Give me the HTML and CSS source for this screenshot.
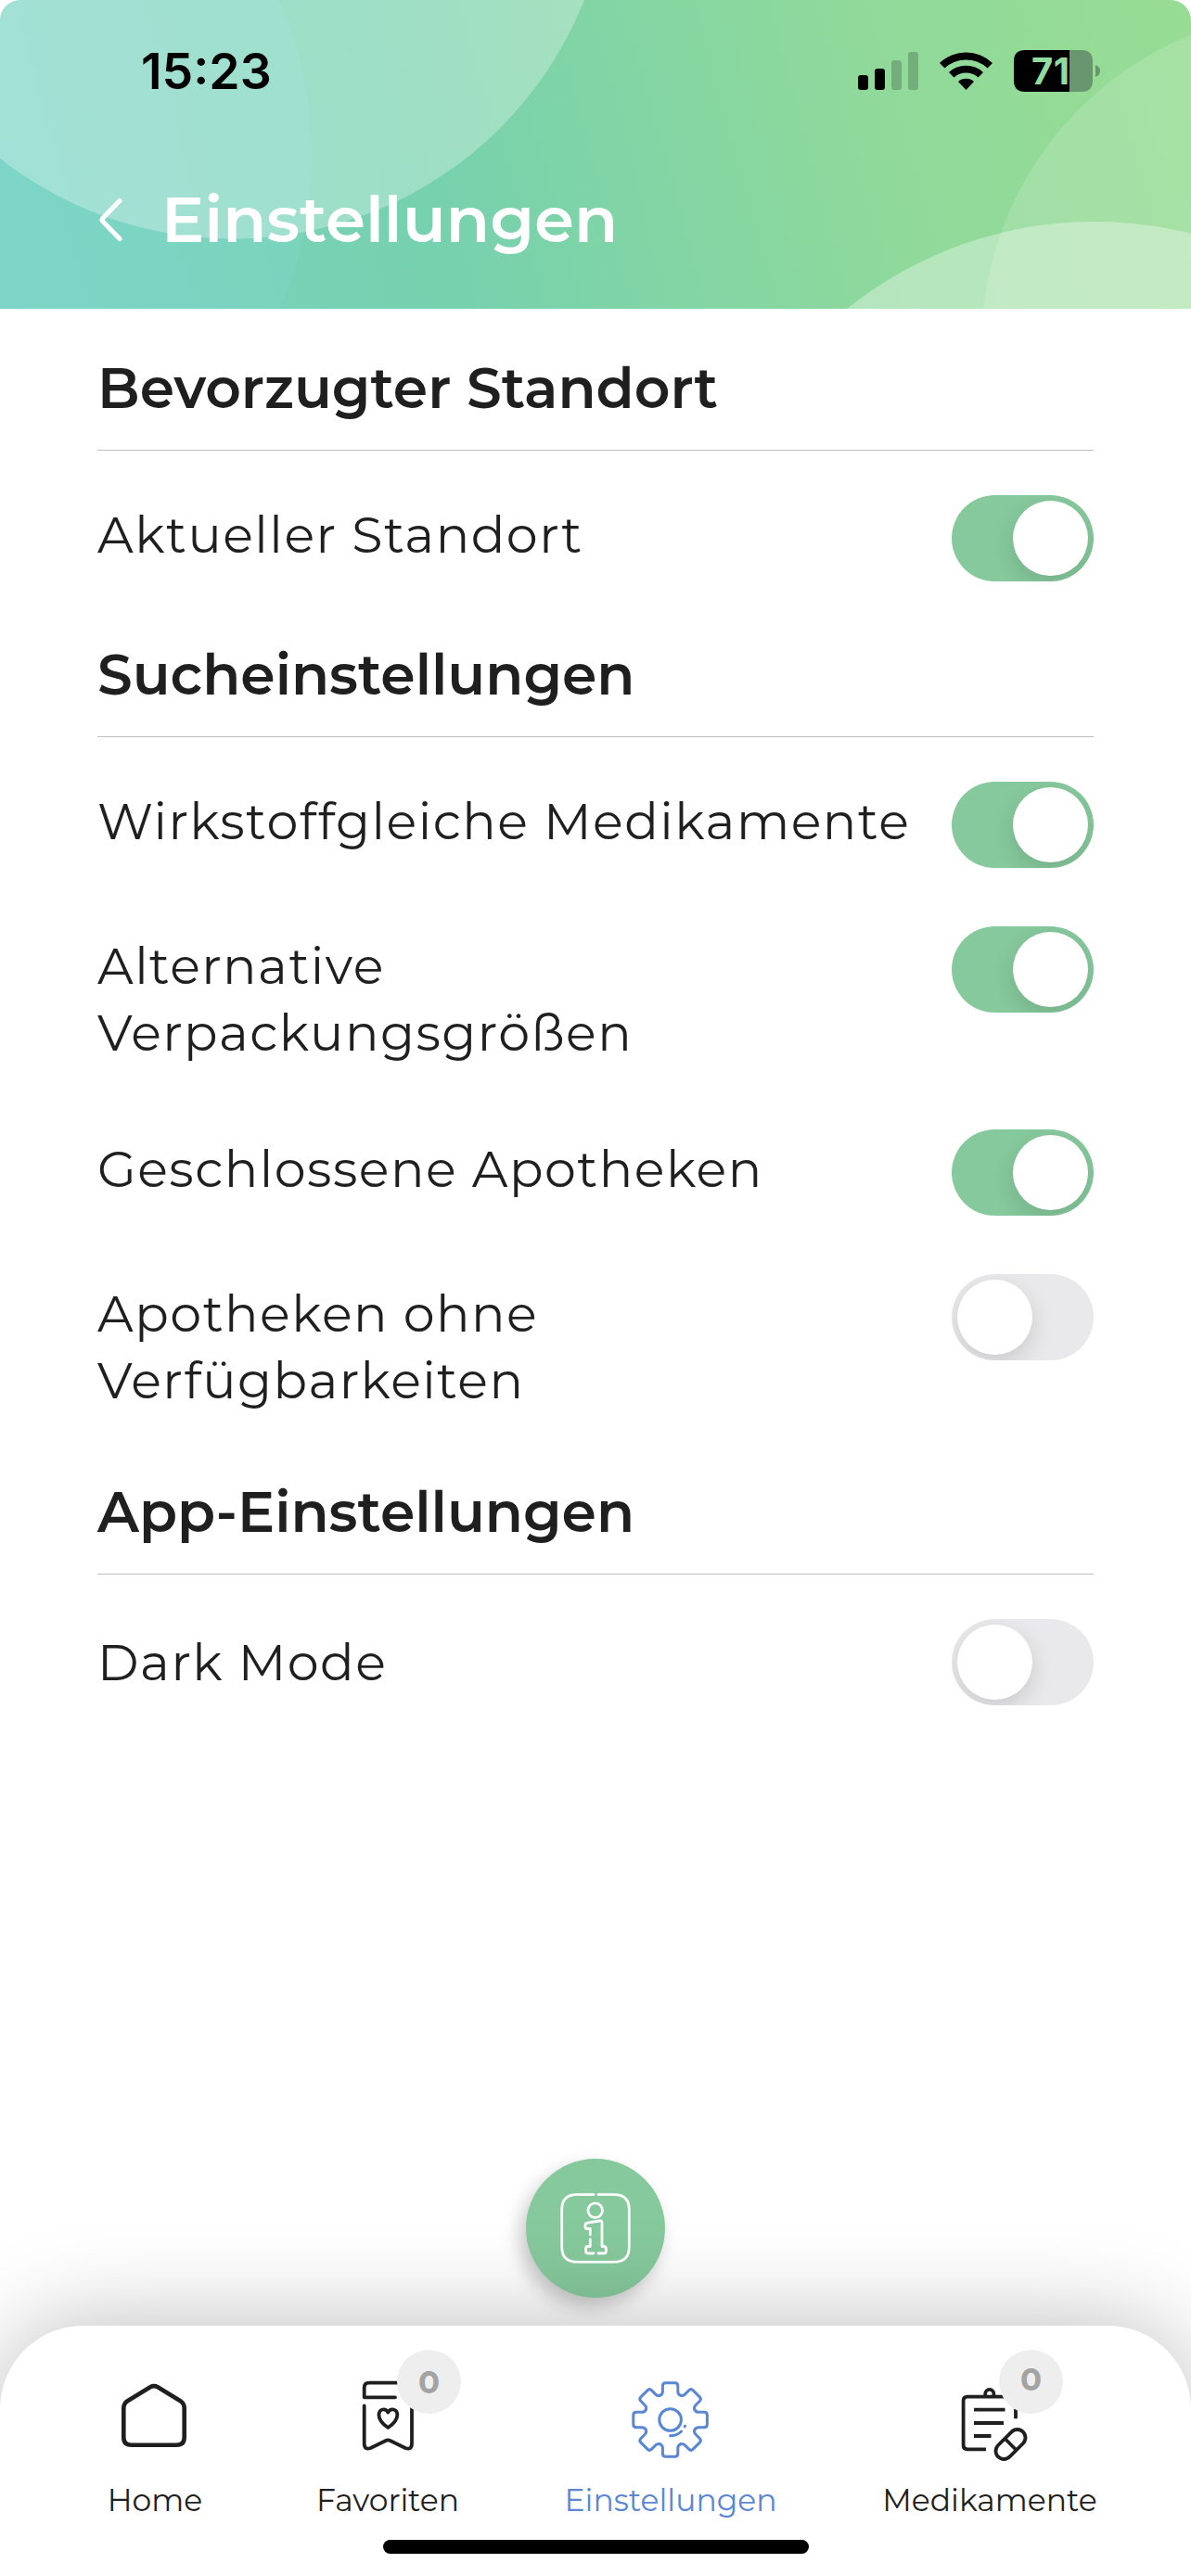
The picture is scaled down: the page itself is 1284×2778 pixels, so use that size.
FILE: index.html
```html
<!DOCTYPE html>
<html lang="de">
<head>
    <meta charset="UTF-8">
    <meta name="viewport" content="width=device-width, initial-scale=1.0">
    <title>Einstellungen</title>
    <link rel="stylesheet" href="styles.css">
</head>
<body>
    <header class="header">
        <svg class="header-bg" viewBox="0 0 1284 333">
            <circle cx="-80" cy="167" r="416" fill="#8cdce0" fill-opacity=".18"/>
            <circle cx="251" cy="-150" r="407.5" fill="#fff" fill-opacity=".29"/>
            <circle cx="1420" cy="373" r="362" fill="#fff" fill-opacity=".15"/>
            <circle cx="1180" cy="665" r="426" fill="#fff" fill-opacity=".34"/>
        </svg>
        <div class="status">
            <span class="time">15:23</span>
            <svg class="status-icons" width="262" height="46" viewBox="0 0 262 46">
                <rect x="0" y="27" width="11" height="16" rx="3"/>
                <rect x="18" y="20" width="11" height="23" rx="3"/>
                <rect x="36" y="11" width="11" height="32" rx="3" opacity=".2"/>
                <rect x="54" y="2" width="11" height="41" rx="3" opacity=".2"/>
                <path d="M88 14 A41 41 0 0 1 145 14 L139.500 19.500 A34 34 0 0 0 93.500 19.500 Z"/>
                <path d="M98 24 A27 27 0 0 1 135 24 L129.500 29.500 A19.500 19.500 0 0 0 103.500 29.500 Z"/>
                <path d="M108 34 A13 13 0 0 1 125 34 L116.500 43 Z"/>
                <path d="M180 0 H228 V45 H180 Q168 45 168 33 V12 Q168 0 180 0 Z"/>
                <path d="M228 0 H241 Q253 0 253 12 V33 Q253 45 241 45 H228 Z" fill="#69966f"/>
                <path d="M256 16 Q261 18 261 22.500 Q261 27 256 29 Z" fill="#69966f"/>
                <text class="charge" x="187" y="37" textLength="41">71</text>
            </svg>
        </div>
        <div class="title-bar">
            <svg width="28" height="50" viewBox="0 0 28 50" fill="none" stroke="#fff" stroke-width="5" stroke-linecap="round" stroke-linejoin="round">
                <path d="M25 4.500 L7 23 Q5 25 7 27 L25 45.500"/>
            </svg>
            <h1>Einstellungen</h1>
        </div>
    </header>

    <main class="settings">
        <h2>Bevorzugter Standort</h2>
        <div class="row">
            <span>Aktueller Standort</span>
            <div class="switch on"></div>
        </div>

        <h2>Sucheinstellungen</h2>
        <div class="row">
            <span>Wirkstoffgleiche Medikamente</span>
            <div class="switch on"></div>
        </div>
        <div class="row">
            <span>Alternative<br>Verpackungsgrößen</span>
            <div class="switch on"></div>
        </div>
        <div class="row">
            <span>Geschlossene Apotheken</span>
            <div class="switch on"></div>
        </div>
        <div class="row">
            <span>Apotheken ohne<br>Verfügbarkeiten</span>
            <div class="switch"></div>
        </div>

        <h2>App-Einstellungen</h2>
        <div class="row centered">
            <span>Dark Mode</span>
            <div class="switch"></div>
        </div>
    </main>

    <div class="info-button">
        <svg width="76" height="76" viewBox="0 0 76 76" fill="none" stroke="#fff" stroke-width="2.800" stroke-linecap="round" stroke-linejoin="round">
            <path d="M36 1.700 H18 Q1.700 1.700 1.700 18 V58 Q1.700 74.300 18 74.300 H58 Q74.300 74.300 74.300 58 V18 Q74.300 1.700 58 1.700 H41"/>
            <circle cx="37.700" cy="18.700" r="7.800"/>
            <path d="M32.300 45 V38.500 H29 Q27 38.500 27 36.500 V35 Q27 32.500 29.500 32.200 L42.500 30 Q45 29.700 45 32 V57.500 H46.500 Q49.500 57.500 49.500 60.500 V62.500 Q49.500 65 47 65 H41"/>
            <path d="M32.300 50 V57.500 H30 Q27.500 57.500 27.500 60.500 V62.500 Q27.500 65 30 65 H36"/>
        </svg>
    </div>

    <nav class="tabs">
        <a class="tab">
            <div class="icon">
                <svg width="84" height="84" viewBox="0 0 84 84" stroke-width="4.600">
                    <path d="M8.300 29 Q8.300 24 12.500 21.300 L37 6.300 Q41 4 45 6.300 L69.500 21.300 Q73.700 24 73.700 29 V60.500 Q73.700 68.700 65.500 68.700 H16.500 Q8.300 68.700 8.300 60.500 Z"/>
                </svg>
            </div>
            <span>Home</span>
        </a>
        <a class="tab">
            <div class="icon">
                <svg width="84" height="84" viewBox="0 0 84 84" stroke-width="3.800">
                    <path d="M60 1.700 H22 Q16.700 1.700 16.700 7 V17.300 H50"/>
                    <path d="M16.700 26.500 V67 Q16.700 74.500 23.500 72 L40 64 Q42.300 62.800 44.600 64 L61 72 Q68 74.500 68 67 V20"/>
                    <path d="M42.300 33.500 C39.500 28.500 32.500 29.500 32.500 36.500 C32.500 42 37 46.500 42.300 50 C47.600 46.500 52.300 42 52.300 36.500 C52.300 29.500 45 28.500 42.300 33.500 Z"/>
                </svg>
                <span class="badge">0</span>
            </div>
            <span>Favoriten</span>
        </a>
        <a class="tab active">
            <div class="icon">
                <svg width="84" height="84" viewBox="0 0 84 84" stroke-width="3">
                    <defs>
                        <path id="tooth" d="M-10.900 -26.300 Q-8.200 -27.400 -8.200 -30.500 V-36.500 Q-8.200 -39.800 -5 -39.800 H5 Q8.200 -39.800 8.200 -36.500 V-30.500 Q8.200 -27.400 10.900 -26.300"/>
                    </defs>
                    <g transform="translate(41.600 41.500)">
                        <use href="#tooth"/>
                        <use href="#tooth" transform="rotate(45)"/>
                        <use href="#tooth" transform="rotate(90)"/>
                        <use href="#tooth" transform="rotate(135)"/>
                        <use href="#tooth" transform="rotate(180)"/>
                        <use href="#tooth" transform="rotate(225)"/>
                        <use href="#tooth" transform="rotate(270)"/>
                        <use href="#tooth" transform="rotate(315)"/>
                        <circle r="11.800"/>
                        <path d="M0 17.300 A17.300 17.300 0 0 0 12 12.500 M15.600 7.300 L15.900 6.700"/>
                    </g>
                </svg>
            </div>
            <span>Einstellungen</span>
        </a>
        <a class="tab">
            <div class="icon">
                <svg width="84" height="84" viewBox="0 0 84 84" stroke-width="3.800" class="butt">
                    <path d="M38 73.300 H18 Q13.600 73.300 13.600 69 V21 Q13.600 16.600 18 16.600 H60 M70 30 V40.300"/>
                    <path d="M37.200 16 V13.500 A4.600 4.600 0 0 1 46.400 13.500 V16"/>
                    <path d="M25 30.700 H58.500 M25 45 H57 M25 59 H43.500"/>
                    <g transform="translate(64.500 68) rotate(-45)">
                        <rect x="-19" y="-8.800" width="38" height="17.600" rx="8.800"/>
                        <path d="M0 -8.800 V8.800"/>
                    </g>
                </svg>
                <span class="badge high">0</span>
            </div>
            <span>Medikamente</span>
        </a>
        <div class="home-indicator"></div>
    </nav>
</body>
</html>
```
FILE: styles.css
```css
* {
    box-sizing: border-box;
}
body {
    margin: 0;
    width: 1284px;
    height: 2778px;
    display: flex;
    flex-direction: column;
    overflow: hidden;
    background: #fff;
    color: #1f1f1f;
    font-family: Montserrat, Inter, sans-serif;
}
h1, h2 {
    margin: 0;
    font-weight: 600;
    white-space: nowrap;
}

/* Header */
.header {
    position: relative;
    height: 333px;
    flex-shrink: 0;
    overflow: hidden;
    border-radius: 22px 22px 0 0;
    background: linear-gradient(75deg, #7ad3c4 0%, #76d1ae 36%, #8fd99b 72%, #98dc94 100%);
}
.header-bg {
    position: absolute;
    inset: 0;
}
.status {
    position: relative;
    display: flex;
    justify-content: space-between;
    align-items: center;
    height: 154px;
    padding: 0 97px 0 152px;
    font-family: Inter, sans-serif;
}
.time {
    padding-bottom: 2px;
    color: #000;
    font-size: 53.5px;
    font-weight: 600;
}
.charge {
    fill: #93dc9f;
    font-size: 40px;
    font-weight: 700;
}
.title-bar {
    position: relative;
    display: flex;
    align-items: center;
    gap: 42px;
    height: 166px;
    padding-left: 104px;
    color: #fff;
}
h1 {
    padding-bottom: 3px;
    font-size: 69px;
    line-height: 80px;
}

/* Settings list */
.settings {
    padding: 48px 105px 0;
}
h2 {
    height: 105px;
    border-bottom: 1px solid #bdbdbd;
    font-size: 60px;
    line-height: 76px;
}
.row {
    display: flex;
    justify-content: space-between;
    align-items: flex-start;
    padding-bottom: 63px;
    font-size: 54px;
    letter-spacing: 1.5px;
    line-height: 72px;
    white-space: nowrap;
}
h2 + .row {
    padding-top: 48px;
}
.row span {
    padding: 7px 0 5px;
}
.row.centered span {
    padding: 11px 0 1px;
}
.switch {
    width: 153px;
    height: 93px;
    padding: 6px;
    flex-shrink: 0;
    overflow: hidden;
    border-radius: 47px;
    background: #e9e9eb;
}
.switch::before {
    content: "";
    display: block;
    width: 81px;
    height: 81px;
    border-radius: 50%;
    background: #fff;
    box-shadow: 0 9px 24px rgba(0, 0, 0, 0.13);
}
.switch.on {
    background: #86c99c;
}
.switch.on::before {
    margin-left: 60px;
}

/* Info button */
.info-button {
    display: flex;
    align-items: center;
    justify-content: center;
    width: 150px;
    height: 150px;
    flex-shrink: 0;
    margin: auto auto 30px;
    border-radius: 50%;
    background: #86c99c;
    box-shadow: -6px 9px 20px rgba(0, 0, 0, 0.22);
}

/* Bottom navigation */
.tabs {
    position: relative;
    display: grid;
    grid-template-columns: 118px 150px 226px 228px;
    column-gap: 117px;
    align-content: start;
    height: 270px;
    flex-shrink: 0;
    padding: 60px 0 0 108px;
    border-radius: 90px 90px 0 0;
    background: #fff;
    box-shadow: 0 0 105px rgba(0, 0, 0, 0.27);
}
.tab {
    display: flex;
    flex-direction: column;
    align-items: center;
    font-size: 33px;
    font-weight: 400;
    line-height: 40px;
    white-space: nowrap;
}
.tab.active {
    color: #5a87d4;
}
.icon {
    position: relative;
    width: 84px;
    height: 84px;
    margin-bottom: 24px;
}
.icon svg {
    display: block;
    overflow: visible;
    fill: none;
    stroke: currentColor;
    stroke-linecap: round;
    stroke-linejoin: round;
}
.icon svg.butt {
    stroke-linecap: butt;
}
.badge {
    position: absolute;
    left: 52px;
    top: -34px;
    width: 69px;
    height: 69px;
    border-radius: 50%;
    background: #eee;
    color: #a3a3a3;
    font-size: 34px;
    font-weight: 700;
    line-height: 70px;
    text-align: center;
}
.badge.high {
    line-height: 64px;
}
.home-indicator {
    grid-column: 1 / -1;
    width: 459px;
    height: 15px;
    margin: 23px 0 0 305px;
    border-radius: 8px;
    background: #000;
}
```
